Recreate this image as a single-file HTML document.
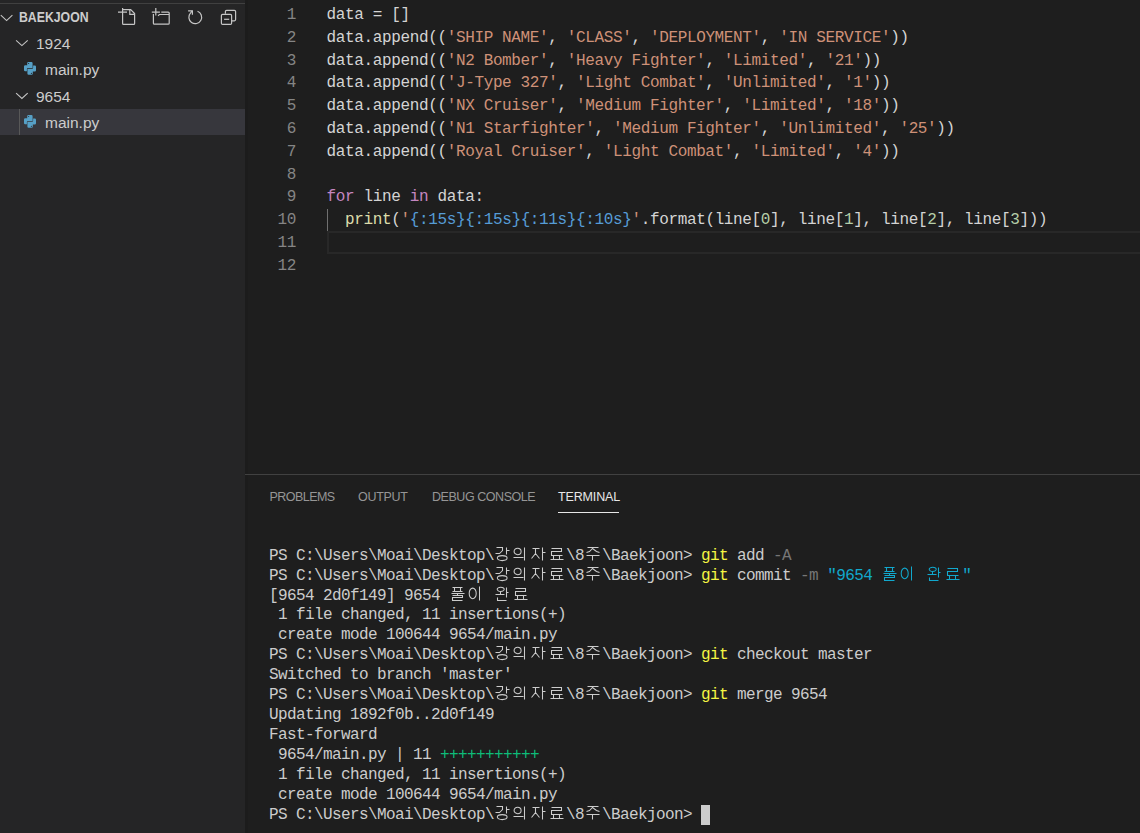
<!DOCTYPE html>
<html><head><meta charset="utf-8">
<style>
*{margin:0;padding:0;box-sizing:border-box}
html,body{width:1140px;height:833px;overflow:hidden;background:#1e1e1e}
body{position:relative;font-family:"Liberation Sans",sans-serif}
.abs{position:absolute;white-space:pre;line-height:20px}
#side{position:absolute;left:0;top:0;width:245px;height:833px;background:#252526}
.topline{position:absolute;left:0;top:3px;width:245px;height:1px;background:#404040}
.shadow{position:absolute;left:245px;top:0;width:3px;height:833px;background:#1c1c1c}
.sb{color:#cccccc;font-size:15.5px;margin-top:-15px}
.ln{position:absolute;left:245px;width:51px;text-align:right;color:#858585;font-family:"Liberation Mono",monospace;font-size:16px;line-height:20px;margin-top:-14px;letter-spacing:-0.36px}
.cl{position:absolute;left:326.6px;color:#d4d4d4;font-family:"Liberation Mono",monospace;font-size:16px;line-height:20px;margin-top:-14px;letter-spacing:-0.364px;white-space:pre}
.panelborder{position:absolute;left:245px;top:474px;width:895px;height:1px;background:#414141}
.tab{position:absolute;top:500.9px;margin-top:-14px;line-height:20px;font-size:12.5px;color:#969696;white-space:pre}
.tl{position:absolute;left:269px;color:#cccccc;font-family:"Liberation Mono",monospace;font-size:16px;line-height:20px;margin-top:-14px;letter-spacing:-0.6px;white-space:pre}
svg{position:absolute;left:0;top:0;overflow:visible}
</style></head><body>
<div id="side"></div>
<div class="topline"></div>
<div class="shadow"></div>
<!-- explorer header -->
<svg width="1140" height="833" fill="none" stroke="#c5c5c5" stroke-width="1.2">
  <path d="M0.8 15.1L6.6 20.6L12.4 15.1" stroke="#c5c5c5" stroke-width="1.1"/>
  <path d="M16.1 40.3L21.9 45.6L27.7 40.3" stroke-width="1.1"/>
  <path d="M16.1 93.1L21.9 98.4L27.7 93.1" stroke-width="1.1"/>
  <!-- new file -->
  <path d="M118 12.2H127M122.6 8.1V23.4Q122.6 24.3 123.5 24.3H133.7Q134.6 24.3 134.6 23.4V13.6L130.7 9.7H122.6M129.8 9.7V14.4H134.6"/>
  <!-- new folder -->
  <path d="M151.8 12.2H159.9M155.8 8V15.4M153.4 13.9V23.2Q153.4 24.2 154.4 24.2H168.2Q169.2 24.2 169.2 23.2V13.1Q169.2 12.1 168.2 12.1H161.3M169.2 14.5H159.3L158.1 15.8"/>
  <!-- refresh -->
  <path d="M197.5 11.3A6.4 6.4 0 1 1 190.6 12.9L192.3 10.9"/>
  <path d="M188.1 10.8H192.4V14.8"/>
  <!-- collapse -->
  <path d="M225.4 13.8V11.6Q225.4 10.4 226.6 10.4H234.4Q235.6 10.4 235.6 11.6V19.6Q235.6 20.8 234.4 20.8H231.8"/>
  <rect x="221.4" y="14.4" width="10.2" height="10" rx="1.2"/>
  <path d="M224.1 19.3H229.2"/>
</svg>
<div class="abs" style="left:19px;top:21.9px;margin-top:-15px;font-size:14.2px;font-weight:bold;transform:scaleX(0.865);transform-origin:0 0;color:#cccccc">BAEKJOON</div>
<div class="abs sb" style="left:36px;top:49px">1924</div>
<div class="abs sb" style="left:45px;top:75px">main.py</div>
<div class="abs sb" style="left:36px;top:101.8px">9654</div>
<div style="position:absolute;left:0;top:109px;width:245px;height:26px;background:#37373d"></div>
<div style="position:absolute;left:19px;top:109px;width:1px;height:26px;background:#585858"></div>
<div class="abs sb" style="left:45px;top:127.6px">main.py</div>
<!-- python icons -->
<svg width="1140" height="833" fill="#56a0c6">
  <g transform="translate(24,62)">
    <path d="M3.2 1.2Q3.2 0 4.4 0H7.4Q8.6 0 8.6 1.2V6H3.9Q2.9 6 2.9 7V9.2H1.2Q0 9.2 0 8V4.5Q0 3.3 1.2 3.3H3.2Z"/>
    <path transform="rotate(180 6 6.4)" d="M3.2 1.2Q3.2 0 4.4 0H7.4Q8.6 0 8.6 1.2V6H3.9Q2.9 6 2.9 7V9.2H1.2Q0 9.2 0 8V4.5Q0 3.3 1.2 3.3H3.2Z"/>
    <circle cx="4.6" cy="1.5" r="0.6" fill="#252526"/><circle cx="7.4" cy="11.3" r="0.6" fill="#252526"/>
  </g>
  <g transform="translate(24,115)">
    <path d="M3.2 1.2Q3.2 0 4.4 0H7.4Q8.6 0 8.6 1.2V6H3.9Q2.9 6 2.9 7V9.2H1.2Q0 9.2 0 8V4.5Q0 3.3 1.2 3.3H3.2Z"/>
    <path transform="rotate(180 6 6.4)" d="M3.2 1.2Q3.2 0 4.4 0H7.4Q8.6 0 8.6 1.2V6H3.9Q2.9 6 2.9 7V9.2H1.2Q0 9.2 0 8V4.5Q0 3.3 1.2 3.3H3.2Z"/>
    <circle cx="4.6" cy="1.5" r="0.6" fill="#37373d"/><circle cx="7.4" cy="11.3" r="0.6" fill="#37373d"/>
  </g>
</svg>

<!-- editor -->
<div style="position:absolute;left:327px;top:231px;width:830px;height:23px;border:2px solid #282828"></div>
<div style="position:absolute;left:327px;top:209px;width:1px;height:22px;background:#707070"></div>
<div class="ln" style="top:18.9px">1</div>
<div class="cl" style="top:18.9px">data = []</div>
<div class="ln" style="top:41.7px">2</div>
<div class="cl" style="top:41.7px">data.append((<span style="color:#ce9178">&#x27;SHIP NAME&#x27;</span>, <span style="color:#ce9178">&#x27;CLASS&#x27;</span>, <span style="color:#ce9178">&#x27;DEPLOYMENT&#x27;</span>, <span style="color:#ce9178">&#x27;IN SERVICE&#x27;</span>))</div>
<div class="ln" style="top:64.5px">3</div>
<div class="cl" style="top:64.5px">data.append((<span style="color:#ce9178">&#x27;N2 Bomber&#x27;</span>, <span style="color:#ce9178">&#x27;Heavy Fighter&#x27;</span>, <span style="color:#ce9178">&#x27;Limited&#x27;</span>, <span style="color:#ce9178">&#x27;21&#x27;</span>))</div>
<div class="ln" style="top:87.3px">4</div>
<div class="cl" style="top:87.3px">data.append((<span style="color:#ce9178">&#x27;J-Type 327&#x27;</span>, <span style="color:#ce9178">&#x27;Light Combat&#x27;</span>, <span style="color:#ce9178">&#x27;Unlimited&#x27;</span>, <span style="color:#ce9178">&#x27;1&#x27;</span>))</div>
<div class="ln" style="top:110.1px">5</div>
<div class="cl" style="top:110.1px">data.append((<span style="color:#ce9178">&#x27;NX Cruiser&#x27;</span>, <span style="color:#ce9178">&#x27;Medium Fighter&#x27;</span>, <span style="color:#ce9178">&#x27;Limited&#x27;</span>, <span style="color:#ce9178">&#x27;18&#x27;</span>))</div>
<div class="ln" style="top:132.9px">6</div>
<div class="cl" style="top:132.9px">data.append((<span style="color:#ce9178">&#x27;N1 Starfighter&#x27;</span>, <span style="color:#ce9178">&#x27;Medium Fighter&#x27;</span>, <span style="color:#ce9178">&#x27;Unlimited&#x27;</span>, <span style="color:#ce9178">&#x27;25&#x27;</span>))</div>
<div class="ln" style="top:155.7px">7</div>
<div class="cl" style="top:155.7px">data.append((<span style="color:#ce9178">&#x27;Royal Cruiser&#x27;</span>, <span style="color:#ce9178">&#x27;Light Combat&#x27;</span>, <span style="color:#ce9178">&#x27;Limited&#x27;</span>, <span style="color:#ce9178">&#x27;4&#x27;</span>))</div>
<div class="ln" style="top:178.5px">8</div>
<div class="ln" style="top:201.3px">9</div>
<div class="cl" style="top:201.3px"><span style="color:#c586c0">for</span> line <span style="color:#c586c0">in</span> data:</div>
<div class="ln" style="top:224.1px">10</div>
<div class="cl" style="top:224.1px">  <span style="color:#dcdcaa">print</span>(<span style="color:#ce9178">&#x27;</span><span style="color:#569cd6">{:15s}{:15s}{:11s}{:10s}</span><span style="color:#ce9178">&#x27;</span>.format(line[<span style="color:#b5cea8">0</span>], line[<span style="color:#b5cea8">1</span>], line[<span style="color:#b5cea8">2</span>], line[<span style="color:#b5cea8">3</span>]))</div>
<div class="ln" style="top:246.9px">11</div>
<div class="ln" style="top:269.7px">12</div>

<!-- panel -->
<div class="panelborder"></div>
<div class="tab" style="left:269.5px;letter-spacing:-0.55px">PROBLEMS</div>
<div class="tab" style="left:358px;letter-spacing:-0.3px">OUTPUT</div>
<div class="tab" style="left:432px;letter-spacing:-0.45px">DEBUG CONSOLE</div>
<div class="tab" style="left:558px;color:#e7e7e7;letter-spacing:-0.15px">TERMINAL</div>
<div style="position:absolute;left:558px;top:512px;width:61px;height:1px;background:#e7e7e7"></div>
<div class="tl" style="top:559.6px"><span style="color:#cccccc">PS C:\Users\Moai\Desktop\        \8  \Baekjoon&gt; </span><span style="color:#f5f543">git</span><span style="color:#cccccc"> add </span><span style="color:#767676">-A</span></div>
<div class="tl" style="top:579.5px"><span style="color:#cccccc">PS C:\Users\Moai\Desktop\        \8  \Baekjoon&gt; </span><span style="color:#f5f543">git</span><span style="color:#cccccc"> commit </span><span style="color:#767676">-m</span><span style="color:#cccccc"> </span><span style="color:#11a8cd">&quot;9654          &quot;</span></div>
<div class="tl" style="top:599.5px"><span style="color:#cccccc">[9654 2d0f149] 9654          </span></div>
<div class="tl" style="top:619.4px"><span style="color:#cccccc"> 1 file changed, 11 insertions(+)</span></div>
<div class="tl" style="top:639.3px"><span style="color:#cccccc"> create mode 100644 9654/main.py</span></div>
<div class="tl" style="top:659.2px"><span style="color:#cccccc">PS C:\Users\Moai\Desktop\        \8  \Baekjoon&gt; </span><span style="color:#f5f543">git</span><span style="color:#cccccc"> checkout master</span></div>
<div class="tl" style="top:679.2px"><span style="color:#cccccc">Switched to branch &#x27;master&#x27;</span></div>
<div class="tl" style="top:699.1px"><span style="color:#cccccc">PS C:\Users\Moai\Desktop\        \8  \Baekjoon&gt; </span><span style="color:#f5f543">git</span><span style="color:#cccccc"> merge 9654</span></div>
<div class="tl" style="top:719.0px"><span style="color:#cccccc">Updating 1892f0b..2d0f149</span></div>
<div class="tl" style="top:739.0px"><span style="color:#cccccc">Fast-forward</span></div>
<div class="tl" style="top:758.9px"><span style="color:#cccccc"> 9654/main.py | 11 </span><span style="color:#0dbc79">+++++++++++</span></div>
<div class="tl" style="top:778.8px"><span style="color:#cccccc"> 1 file changed, 11 insertions(+)</span></div>
<div class="tl" style="top:798.8px"><span style="color:#cccccc"> create mode 100644 9654/main.py</span></div>
<div class="tl" style="top:818.7px"><span style="color:#cccccc">PS C:\Users\Moai\Desktop\        \8  \Baekjoon&gt; </span></div>
<div style="position:absolute;left:701px;top:805px;width:9px;height:20px;background:#cccccc"></div>
<svg width="1140" height="833" fill="none" stroke-width="1.05">
<g transform="translate(495,544)" stroke="#cccccc"><path d="M1.5 3.5H7.5V6.5L4.5 9.5H0.5M11.5 3.5V10.5M11.5 6.5H14.5"/><ellipse cx="7.2" cy="14.1" rx="4.9" ry="2.5"/></g>
<g transform="translate(513,544)" stroke="#cccccc"><ellipse cx="4.6" cy="7.45" rx="3.5" ry="3.2"/><path d="M0.5 13.5H10.5M11.5 3.5V16.5"/></g>
<g transform="translate(531,544)" stroke="#cccccc"><path d="M1.5 4.5H8.5M4.5 4.5V9.5L0.5 14.5M4.5 9.5L8.5 14.5M11.5 3.5V16.5M11.5 8.5H14.5"/></g>
<g transform="translate(549,544)" stroke="#cccccc"><path d="M2.5 4.5H12.5V7.5H2.5V11.5H13.5M4.5 11.5V15.5M10.5 11.5V15.5M1.5 15.5H14.5"/></g>
<g transform="translate(585,544)" stroke="#cccccc"><path d="M2.5 3.5H13.5M1.5 8.5L4.5 7.5L7.5 4.5L11.5 7.5L14.5 8.5M1.5 11.5H14.5M7.5 11.5V16.5"/></g>
<g transform="translate(495,564)" stroke="#cccccc"><path d="M1.5 3.5H7.5V6.5L4.5 9.5H0.5M11.5 3.5V10.5M11.5 6.5H14.5"/><ellipse cx="7.2" cy="14.1" rx="4.9" ry="2.5"/></g>
<g transform="translate(513,564)" stroke="#cccccc"><ellipse cx="4.6" cy="7.45" rx="3.5" ry="3.2"/><path d="M0.5 13.5H10.5M11.5 3.5V16.5"/></g>
<g transform="translate(531,564)" stroke="#cccccc"><path d="M1.5 4.5H8.5M4.5 4.5V9.5L0.5 14.5M4.5 9.5L8.5 14.5M11.5 3.5V16.5M11.5 8.5H14.5"/></g>
<g transform="translate(549,564)" stroke="#cccccc"><path d="M2.5 4.5H12.5V7.5H2.5V11.5H13.5M4.5 11.5V15.5M10.5 11.5V15.5M1.5 15.5H14.5"/></g>
<g transform="translate(585,564)" stroke="#cccccc"><path d="M2.5 3.5H13.5M1.5 8.5L4.5 7.5L7.5 4.5L11.5 7.5L14.5 8.5M1.5 11.5H14.5M7.5 11.5V16.5"/></g>
<g transform="translate(882,564)" stroke="#11a8cd"><path d="M2.5 3.5H12.5M4.5 3.5V7.5M10.5 3.5V7.5M2.5 7.5H12.5M1.5 9.5H14.5M7.5 9.5V11.5M2.5 11.5H12.5V13.5H2.5V16.5H12.5"/></g>
<g transform="translate(900,564)" stroke="#11a8cd"><ellipse cx="4.7" cy="9.4" rx="3.5" ry="5.3"/><path d="M11.5 2.5V16.5"/></g>
<g transform="translate(927,564)" stroke="#11a8cd"><ellipse cx="5.7" cy="5.35" rx="3.5" ry="2.1"/><path d="M5.5 7.5V10.5M0.5 10.5H9.5M11.5 3.5V13.5M11.5 8.5H13.5M2.5 13.5V16.5H11.5"/></g>
<g transform="translate(945,564)" stroke="#11a8cd"><path d="M2.5 4.5H12.5V7.5H2.5V11.5H13.5M4.5 11.5V15.5M10.5 11.5V15.5M1.5 15.5H14.5"/></g>
<g transform="translate(450,584)" stroke="#cccccc"><path d="M2.5 3.5H12.5M4.5 3.5V7.5M10.5 3.5V7.5M2.5 7.5H12.5M1.5 9.5H14.5M7.5 9.5V11.5M2.5 11.5H12.5V13.5H2.5V16.5H12.5"/></g>
<g transform="translate(468,584)" stroke="#cccccc"><ellipse cx="4.7" cy="9.4" rx="3.5" ry="5.3"/><path d="M11.5 2.5V16.5"/></g>
<g transform="translate(495,584)" stroke="#cccccc"><ellipse cx="5.7" cy="5.35" rx="3.5" ry="2.1"/><path d="M5.5 7.5V10.5M0.5 10.5H9.5M11.5 3.5V13.5M11.5 8.5H13.5M2.5 13.5V16.5H11.5"/></g>
<g transform="translate(513,584)" stroke="#cccccc"><path d="M2.5 4.5H12.5V7.5H2.5V11.5H13.5M4.5 11.5V15.5M10.5 11.5V15.5M1.5 15.5H14.5"/></g>
<g transform="translate(495,643)" stroke="#cccccc"><path d="M1.5 3.5H7.5V6.5L4.5 9.5H0.5M11.5 3.5V10.5M11.5 6.5H14.5"/><ellipse cx="7.2" cy="14.1" rx="4.9" ry="2.5"/></g>
<g transform="translate(513,643)" stroke="#cccccc"><ellipse cx="4.6" cy="7.45" rx="3.5" ry="3.2"/><path d="M0.5 13.5H10.5M11.5 3.5V16.5"/></g>
<g transform="translate(531,643)" stroke="#cccccc"><path d="M1.5 4.5H8.5M4.5 4.5V9.5L0.5 14.5M4.5 9.5L8.5 14.5M11.5 3.5V16.5M11.5 8.5H14.5"/></g>
<g transform="translate(549,643)" stroke="#cccccc"><path d="M2.5 4.5H12.5V7.5H2.5V11.5H13.5M4.5 11.5V15.5M10.5 11.5V15.5M1.5 15.5H14.5"/></g>
<g transform="translate(585,643)" stroke="#cccccc"><path d="M2.5 3.5H13.5M1.5 8.5L4.5 7.5L7.5 4.5L11.5 7.5L14.5 8.5M1.5 11.5H14.5M7.5 11.5V16.5"/></g>
<g transform="translate(495,683)" stroke="#cccccc"><path d="M1.5 3.5H7.5V6.5L4.5 9.5H0.5M11.5 3.5V10.5M11.5 6.5H14.5"/><ellipse cx="7.2" cy="14.1" rx="4.9" ry="2.5"/></g>
<g transform="translate(513,683)" stroke="#cccccc"><ellipse cx="4.6" cy="7.45" rx="3.5" ry="3.2"/><path d="M0.5 13.5H10.5M11.5 3.5V16.5"/></g>
<g transform="translate(531,683)" stroke="#cccccc"><path d="M1.5 4.5H8.5M4.5 4.5V9.5L0.5 14.5M4.5 9.5L8.5 14.5M11.5 3.5V16.5M11.5 8.5H14.5"/></g>
<g transform="translate(549,683)" stroke="#cccccc"><path d="M2.5 4.5H12.5V7.5H2.5V11.5H13.5M4.5 11.5V15.5M10.5 11.5V15.5M1.5 15.5H14.5"/></g>
<g transform="translate(585,683)" stroke="#cccccc"><path d="M2.5 3.5H13.5M1.5 8.5L4.5 7.5L7.5 4.5L11.5 7.5L14.5 8.5M1.5 11.5H14.5M7.5 11.5V16.5"/></g>
<g transform="translate(495,803)" stroke="#cccccc"><path d="M1.5 3.5H7.5V6.5L4.5 9.5H0.5M11.5 3.5V10.5M11.5 6.5H14.5"/><ellipse cx="7.2" cy="14.1" rx="4.9" ry="2.5"/></g>
<g transform="translate(513,803)" stroke="#cccccc"><ellipse cx="4.6" cy="7.45" rx="3.5" ry="3.2"/><path d="M0.5 13.5H10.5M11.5 3.5V16.5"/></g>
<g transform="translate(531,803)" stroke="#cccccc"><path d="M1.5 4.5H8.5M4.5 4.5V9.5L0.5 14.5M4.5 9.5L8.5 14.5M11.5 3.5V16.5M11.5 8.5H14.5"/></g>
<g transform="translate(549,803)" stroke="#cccccc"><path d="M2.5 4.5H12.5V7.5H2.5V11.5H13.5M4.5 11.5V15.5M10.5 11.5V15.5M1.5 15.5H14.5"/></g>
<g transform="translate(585,803)" stroke="#cccccc"><path d="M2.5 3.5H13.5M1.5 8.5L4.5 7.5L7.5 4.5L11.5 7.5L14.5 8.5M1.5 11.5H14.5M7.5 11.5V16.5"/></g>
</svg>
</body></html>
